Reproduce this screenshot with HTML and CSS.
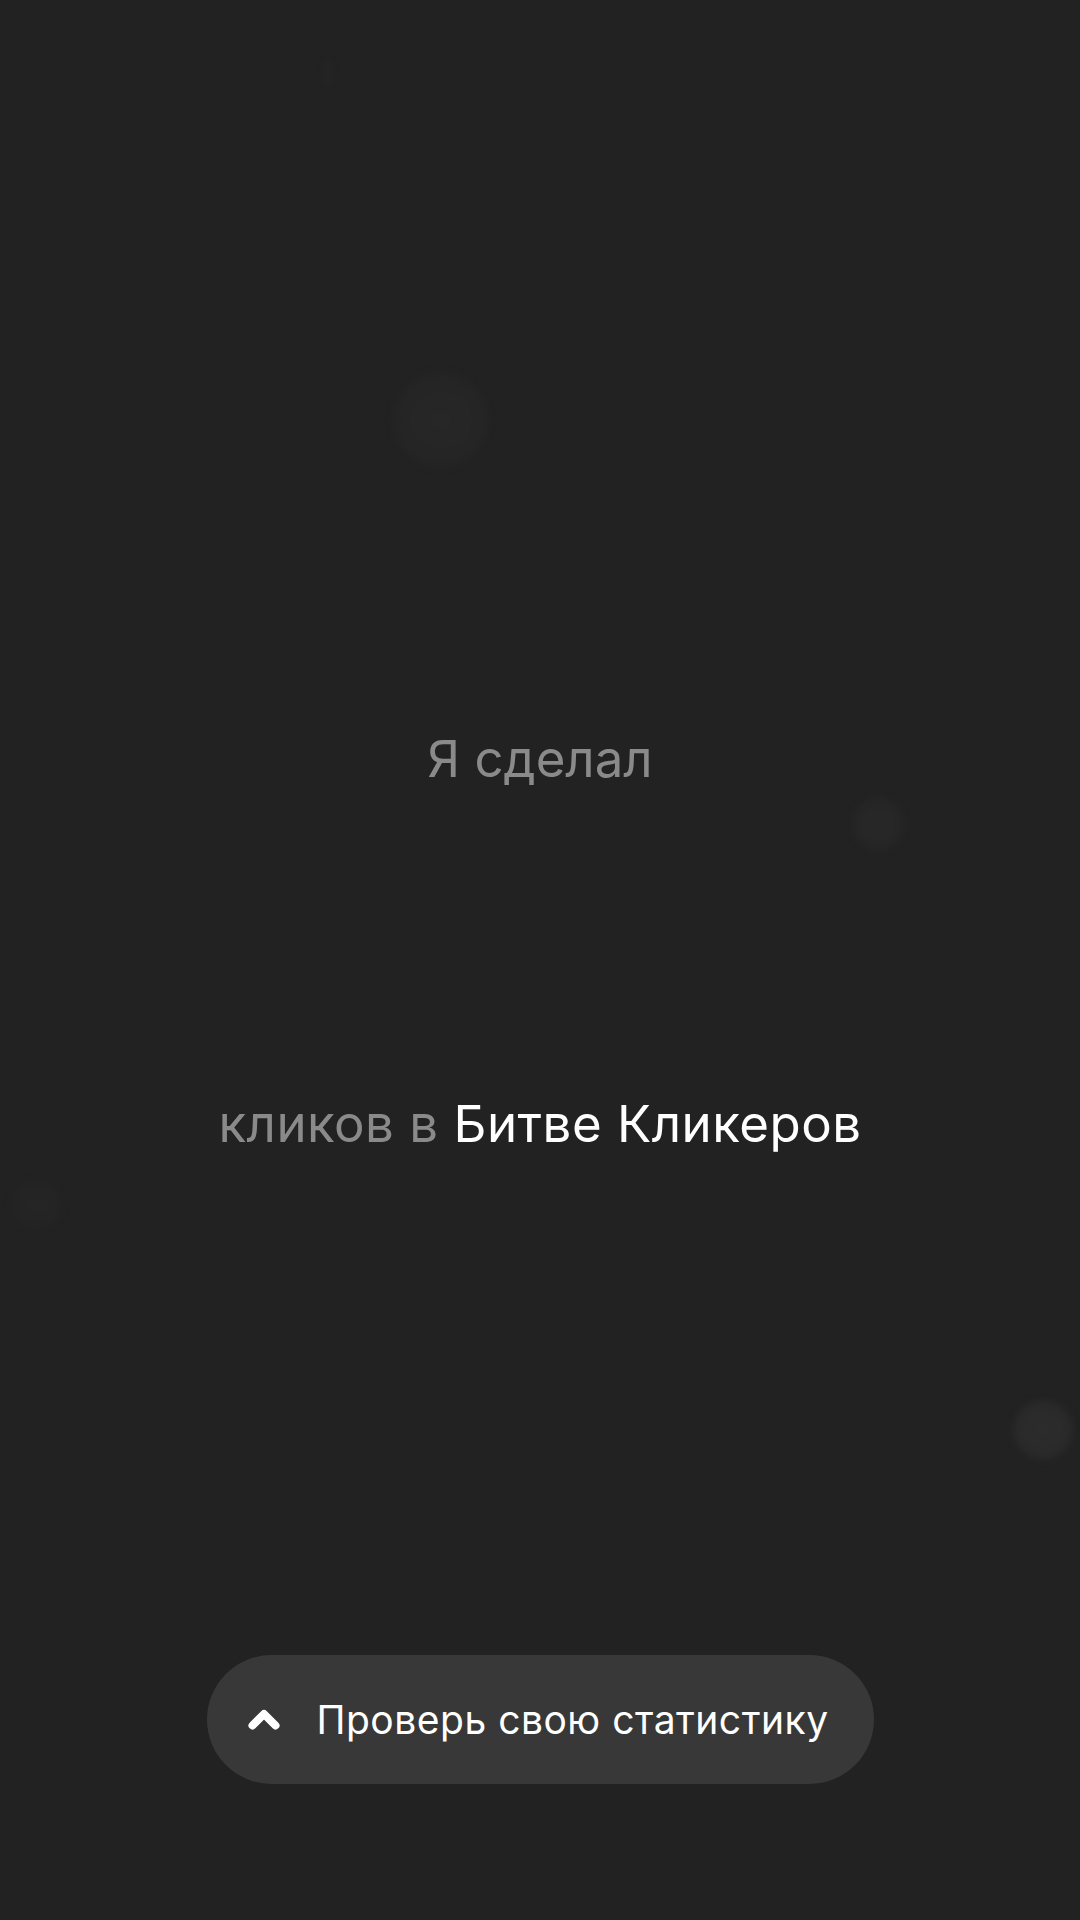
FILE: index.html
```html
<!DOCTYPE html>
<html lang="ru">
<head>
<meta charset="utf-8">
<link rel="stylesheet" href="styles.css">
</head>
<body>
<div class="screen">
  <div class="bubble b1"></div>
  <div class="bubble b2"></div>
  <div class="bubble b3"></div>
  <div class="bubble b4"></div>
  <div class="bubble b5"></div>
  <main class="content">
    <p class="line line-top">Я сделал</p>
    <p class="line line-bottom">кликов в <span class="accent">Битве Кликеров</span></p>
    <button class="stats-btn">
      <svg class="chev" width="32" height="26" viewBox="0 0 32 26"><path d="M4.5 20.5 L16 9 L27.5 20.5" fill="none" stroke="#fff" stroke-width="8" stroke-linecap="round" stroke-linejoin="round"/></svg>
      <span class="btn-label">Проверь свою статистику</span>
    </button>
  </main>
</div>
</body>
</html>
```
FILE: styles.css
```css
html, body {
  margin: 0;
  padding: 0;
  background: #222222;
}
.screen {
  position: relative;
  width: 1080px;
  height: 1920px;
  overflow: hidden;
  background: #222222;
  font-family: Inter, Roboto, sans-serif;
}
.content {
  display: flex;
  flex-direction: column;
  align-items: center;
  padding-top: 728px;
}
.line {
  margin: 0;
  font-size: 51px;
  line-height: 62px;
  color: #8a8a8a;
  white-space: nowrap;
}
.line-bottom {
  margin-top: 303px;
  letter-spacing: 0.5px;
}
.accent {
  color: #ffffff;
}
.stats-btn {
  margin-top: 500px;
  height: 129px;
  width: 667px;
  border: none;
  border-radius: 65px;
  background: #383838;
  display: flex;
  align-items: center;
  padding: 0 0 0 41px;
  gap: 37px;
  font-family: Inter, Roboto, sans-serif;
  cursor: pointer;
}
.chev {
  display: block;
  flex: none;
  margin-top: -4px;
}
.btn-label {
  font-size: 39px;
  letter-spacing: 0.5px;
  color: #ffffff;
  white-space: nowrap;
}
.bubble {
  position: absolute;
  border-radius: 50%;
  filter: blur(3px);
}
.b1 {
  left: 393px; top: 372px; width: 96px; height: 96px;
  background: radial-gradient(circle, #272727 0%, #252525 60%, rgba(37,37,37,0) 100%);
}
.b2 {
  left: 852px; top: 797px; width: 52px; height: 54px;
  background: radial-gradient(circle, #282828 0%, #262626 60%, rgba(38,38,38,0) 100%);
}
.b3 {
  left: 12px; top: 1180px; width: 50px; height: 50px;
  background: radial-gradient(circle, #252525 0%, #242424 60%, rgba(36,36,36,0) 100%);
}
.b4 {
  left: 1013px; top: 1400px; width: 60px; height: 60px;
  background: radial-gradient(circle, #2c2c2c 0%, #2a2a2a 60%, rgba(42,42,42,0) 100%);
}
.b5 {
  left: 322px; top: 60px; width: 12px; height: 28px;
  background: #242424;
  filter: blur(2px);
}
```
